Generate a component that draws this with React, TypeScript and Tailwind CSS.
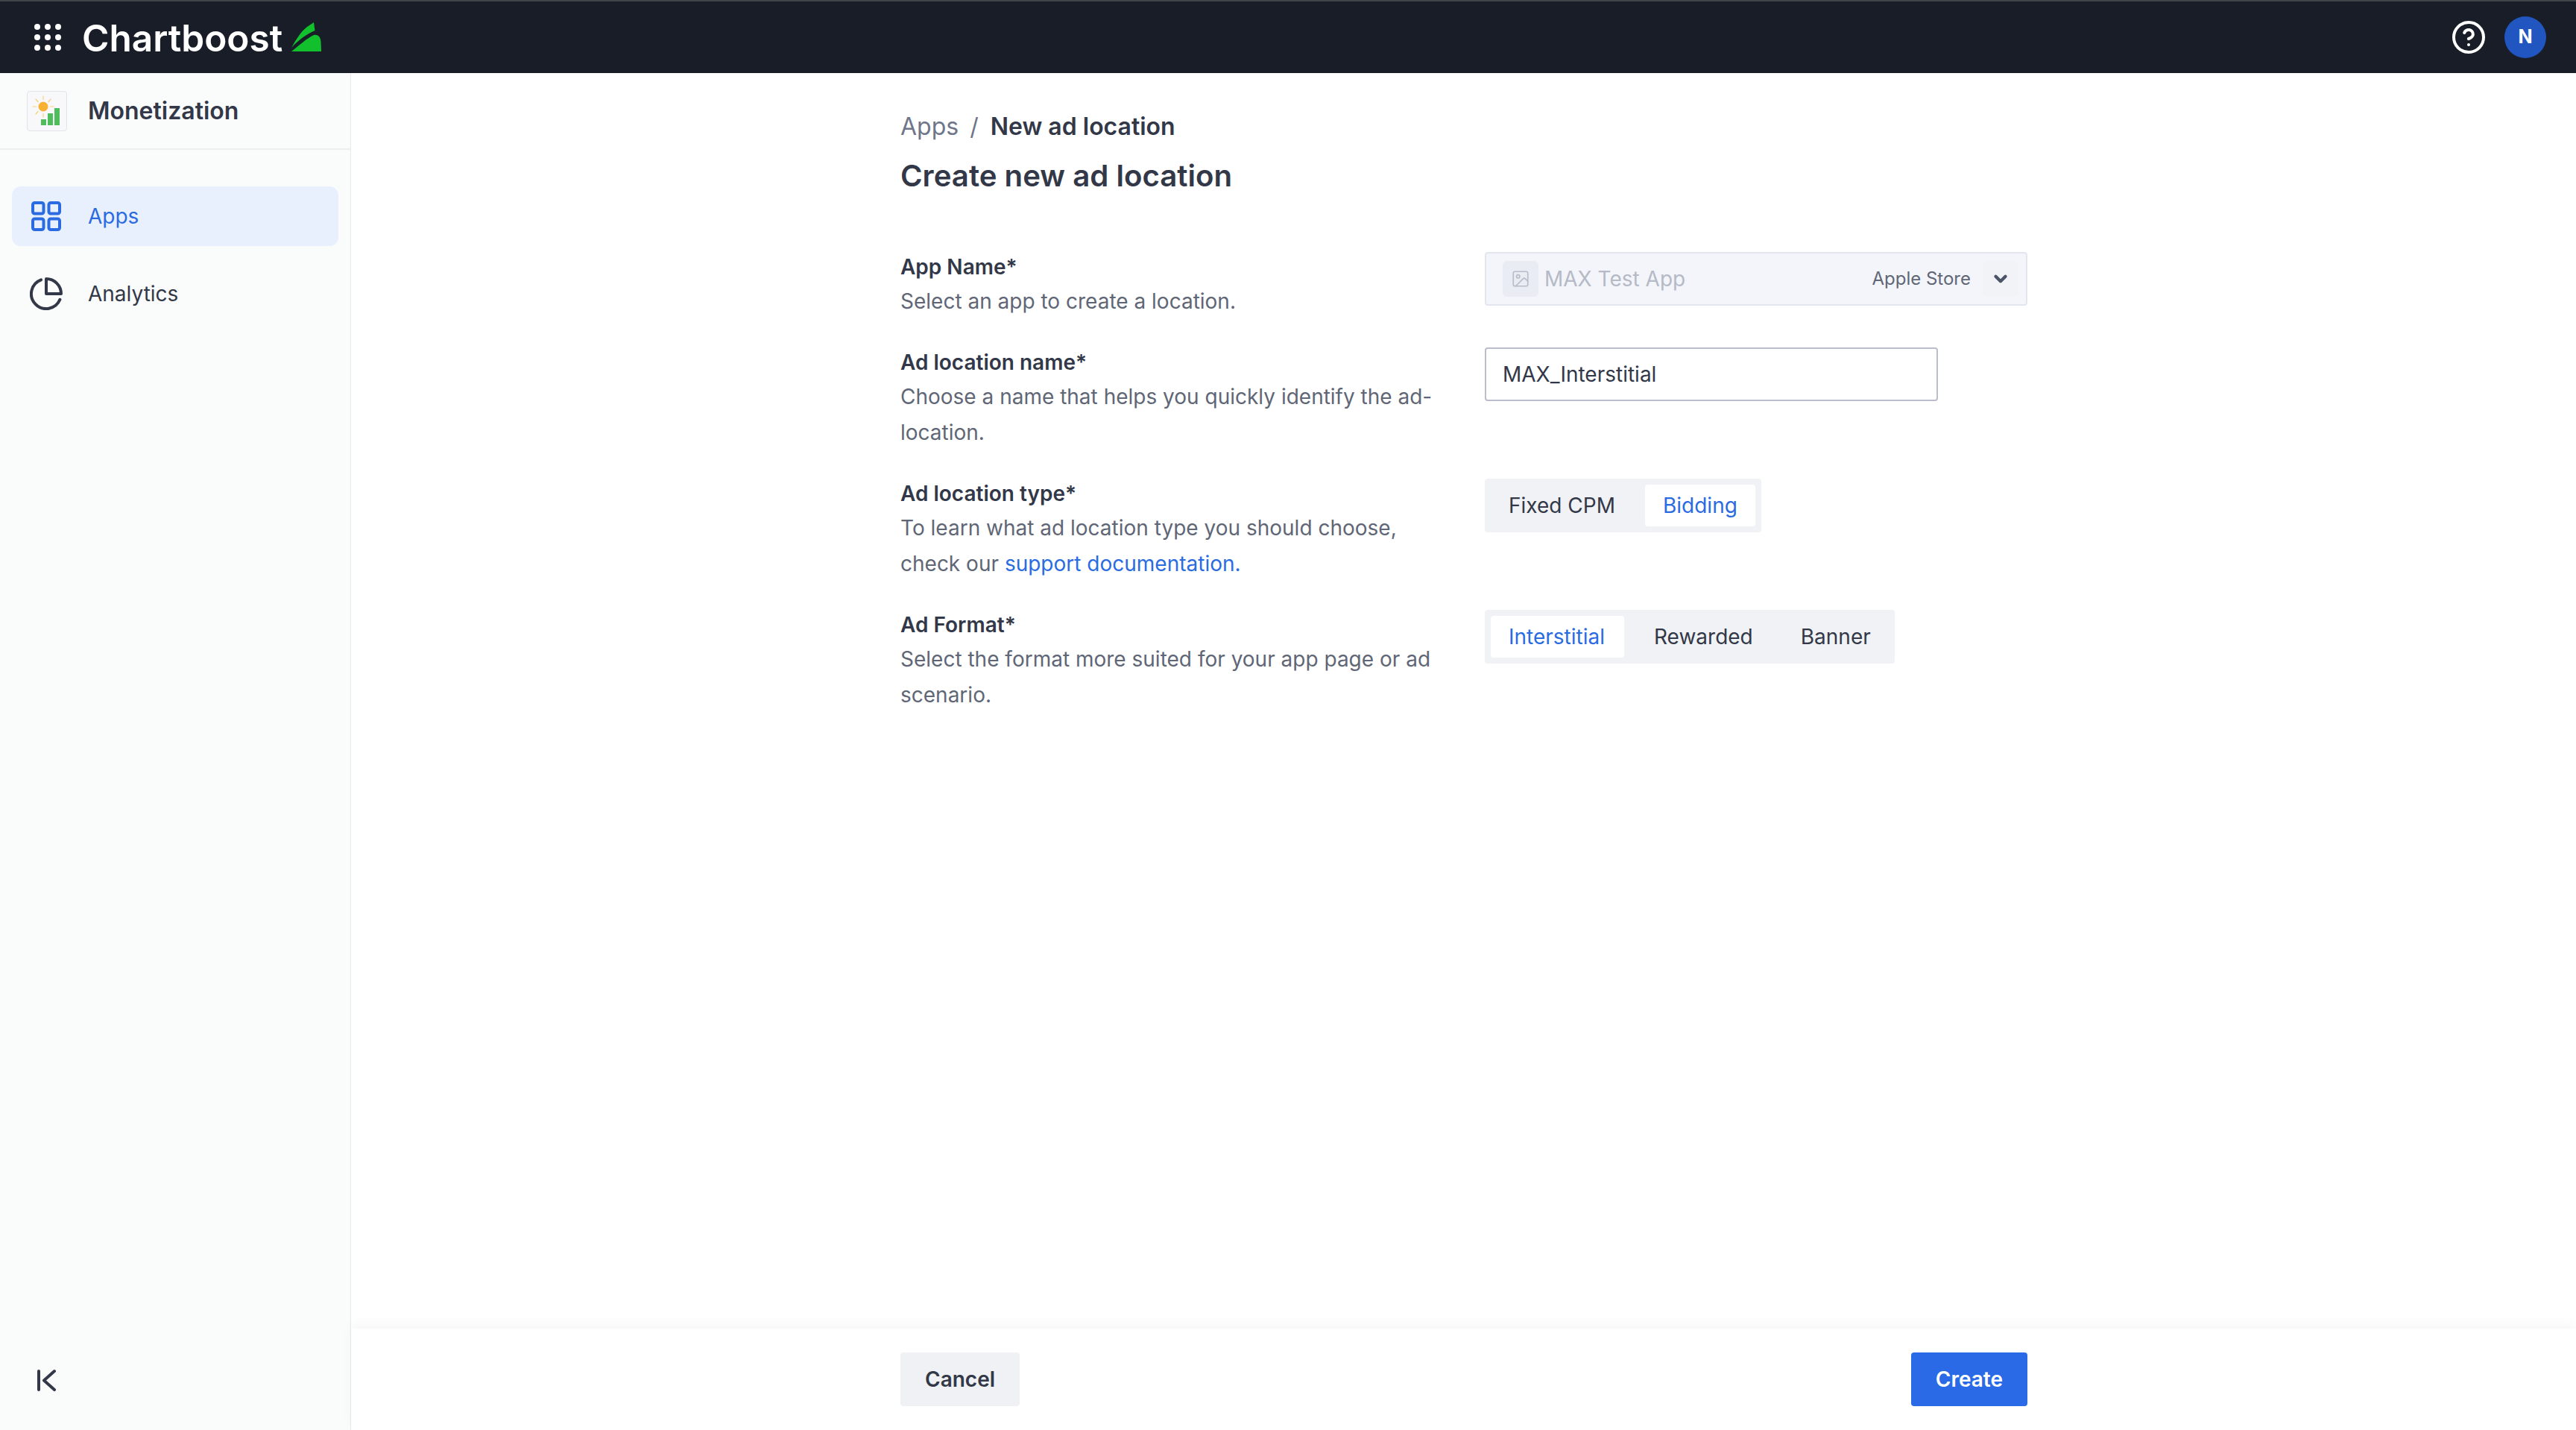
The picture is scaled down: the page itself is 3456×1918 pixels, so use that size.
import React from 'react';
import { ChevronDown, CircleHelp, Image } from 'lucide-react';

const dots = [0, 1, 2, 3, 4, 5, 6, 7, 8];

const AppsIcon = () => (
  <svg width="40" height="40" viewBox="0 0 40 40" fill="none" stroke="#2b6be2" strokeWidth="4">
    <rect x="2" y="2" width="14.5" height="14.5" rx="2.5" />
    <rect x="23.5" y="2" width="14.5" height="14.5" rx="2.5" />
    <rect x="2" y="23.5" width="14.5" height="14.5" rx="2.5" />
    <rect x="23.5" y="23.5" width="14.5" height="14.5" rx="2.5" />
  </svg>
);

const PieIcon = () => (
  <svg width="44" height="44" viewBox="0 0 44 44" fill="none" stroke="#323848" strokeWidth="4" strokeLinecap="round" strokeLinejoin="round">
    <path d="M15 3.3A20 20 0 1 0 40.4 29.8" />
    <path d="M22 2A20 20 0 0 1 42 22H22Z" />
  </svg>
);

const Leaf = () => (
  <svg width="42" height="42" viewBox="0 0 42 42" fill="#11c02c">
    <path d="M31 1L32.5 12C22 16 10 25 1 35C7 24 14 13 22 7Z" />
    <path d="M1 40C10 33 22 22 31 18C38 17 40 22 40.500 27L41 40Z" />
  </svg>
);

const MonetizationLogo = () => (
  <svg width="44" height="44" viewBox="0 0 44 44" fill="none">
    <g stroke="#f8cf77" strokeWidth="1.200" strokeLinecap="round">
      <path d="M17 2V6.500M17 25.500V30M3 16H7.500M26.500 16H31M7 6L10 9.500M27 6L24 9.500M7 26L10 22.500" />
    </g>
    <circle cx="17" cy="16" r="6.500" fill="#f8b133" />
    <rect x="14" y="33" width="7" height="8" fill="#4fbd5b" />
    <rect x="23" y="25" width="7" height="16" fill="#4fbd5b" />
    <rect x="32" y="18" width="7" height="23" fill="#4fbd5b" />
  </svg>
);

const CollapseIcon = () => (
  <svg width="28" height="30" viewBox="0 0 28 30" fill="none" stroke="#323848" strokeWidth="4" strokeLinecap="round" strokeLinejoin="round">
    <path d="M4 3V28" />
    <path d="M25 3L11 15.500L25 28" />
  </svg>
);

const Segmented = ({ options, active, wide }: { options: string[]; active: string; wide?: boolean }) => (
  <div className="mt-[2px] inline-flex h-[72px] items-center gap-4 rounded-[4px] bg-[#f0f2f5] p-2">
    {options.map((option) => (
      <div
        key={option}
        className={
          option === active
            ? wide
              ? 'flex h-14 items-center rounded-[4px] bg-white pr-[26px] pl-6 text-[#2b6be2]'
              : 'flex h-14 items-center rounded-[4px] bg-white px-6 text-[#2b6be2]'
            : 'flex h-14 items-center rounded-[4px] px-6 text-[#323848]'
        }
      >
        {option}
      </div>
    ))}
  </div>
);

const FormRow = ({ label, children, control }: { label: string; children: React.ReactNode; control: React.ReactNode }) => (
  <div className="grid grid-cols-[784px_1fr] pb-9">
    <div>
      <div className="text-[28px] leading-[44px] font-semibold text-[#323848]">{label}</div>
      <p className="w-[730px] text-[28px] leading-[48px] text-[#5f6676]">{children}</p>
    </div>
    <div>{control}</div>
  </div>
);

export default function App() {
  return (
    <div className="flex h-screen flex-col overflow-hidden bg-white font-['Inter',sans-serif] text-[28px]">
      {/* Top bar */}
      <header className="flex h-[98px] shrink-0 items-center justify-between border-t-2 border-[#3f4449] bg-[#181d27] pr-10 pl-[46px]">
        <div className="flex items-center">
          <div className="grid grid-cols-[8px_8px_8px] gap-[6px]">
            {dots.map((d) => (
              <span key={d} className="h-2 w-2 rounded-full bg-white" />
            ))}
          </div>
          <span className="mt-[3px] ml-[28px] text-[49.5px] leading-none font-semibold text-white">Chartboost</span>
          <span className="ml-[11px]">
            <Leaf />
          </span>
        </div>
        <div className="flex items-center gap-6">
          <CircleHelp size={48} strokeWidth={2} className="text-white" />
          <div className="flex h-14 w-14 items-center justify-center rounded-full bg-[#2156c0] text-[25px] font-bold text-white">
            N
          </div>
        </div>
      </header>

      <div className="flex min-h-0 flex-1">
        {/* Sidebar */}
        <aside className="flex w-[471px] shrink-0 flex-col border-r border-[#e8e9ec] bg-[#fafbfb]">
          <div className="flex h-[103px] items-center border-b-2 border-[#eceef2] pl-9">
            <div className="flex h-[54px] w-[54px] items-center justify-center rounded-[4px] border border-[#e2e4e9] bg-[#f8f8fb]">
              <MonetizationLogo />
            </div>
            <span className="ml-[28px] text-[32px] font-semibold text-[#323848]">Monetization</span>
          </div>
          <nav className="mt-[49px] flex flex-col gap-6 px-4">
            <div className="flex h-20 items-center rounded-xl bg-[#e8f0fd] pl-[26px] text-[#2b6be2]">
              <AppsIcon />
              <span className="ml-9">Apps</span>
            </div>
            <div className="flex h-20 items-center pl-6 text-[#323848]">
              <PieIcon />
              <span className="ml-[34px]">Analytics</span>
            </div>
          </nav>
          <div className="mt-auto flex h-[134px] items-center pl-12">
            <CollapseIcon />
          </div>
        </aside>

        {/* Main */}
        <main className="flex min-w-0 flex-1 flex-col">
          <div className="flex-1 pt-[50px] pr-[736px] pl-[737px]">
            <div className="flex h-11 items-center text-[32px] whitespace-nowrap">
              <span className="text-[#6f7689]">Apps</span>
              <span className="mr-4 ml-[15px] text-[#6f7689]">/</span>
              <span className="font-semibold text-[#323848]">New ad location</span>
            </div>
            <h1 className="mt-[16px] mb-[72px] text-[40.2px] leading-[56px] font-semibold text-[#323848]">
              Create new ad location
            </h1>

            <FormRow
              label="App Name*"
              control={
                <div className="mt-[2px] flex h-[72px] items-center rounded-[4px] border-2 border-[#e3e6ee] bg-[#f3f5fb] pr-[10px] pl-[22px]">
                  <div className="flex h-12 w-12 items-center justify-center rounded-md bg-[#e9ecf2]">
                    <Image size={26} strokeWidth={1.500} className="text-[#b7bcc8]" />
                  </div>
                  <span className="ml-[8px] text-[#b5bac6]">MAX Test App</span>
                  <span className="ml-auto text-[24px] text-[#5f6676]">Apple Store</span>
                  <div className="ml-[16px] flex h-12 w-12 items-center justify-center rounded-md bg-[#f1f3f6]">
                    <ChevronDown size={26} strokeWidth={4} className="text-[#4d5468]" />
                  </div>
                </div>
              }
            >
              Select an app to create a location.
            </FormRow>

            <FormRow
              label="Ad location name*"
              control={
                <div className="mt-[2px] flex h-[72px] w-[608px] items-center rounded-[4px] border-2 border-[#b9bdcc] bg-white pl-[22px] text-[#323848]">
                  MAX_Interstitial
                </div>
              }
            >
              Choose a name that helps you quickly identify the ad-location.
            </FormRow>

            <FormRow label="Ad location type*" control={<Segmented options={['Fixed CPM', 'Bidding']} active="Bidding" />}>
              To learn what ad location type you should choose, check our{' '}
              <span className="text-[#2b6be2]">support documentation.</span>
            </FormRow>

            <FormRow
              label="Ad Format*"
              control={<Segmented options={['Interstitial', 'Rewarded', 'Banner']} active="Interstitial" wide />}
            >
              Select the format more suited for your app page or ad scenario.
            </FormRow>
          </div>

          {/* Footer */}
          <footer className="flex h-[136px] shrink-0 items-center justify-between bg-white pr-[736px] pl-[737px] shadow-[0_-6px_14px_rgba(0,0,0,0.035)]">
            <button className="h-[72px] rounded-[4px] bg-[#eff1f5] px-[33px] font-semibold text-[#323848]">Cancel</button>
            <button className="h-[72px] rounded-[4px] bg-[#2a6ae6] px-[33px] font-semibold text-white">Create</button>
          </footer>
        </main>
      </div>
    </div>
  );
}
